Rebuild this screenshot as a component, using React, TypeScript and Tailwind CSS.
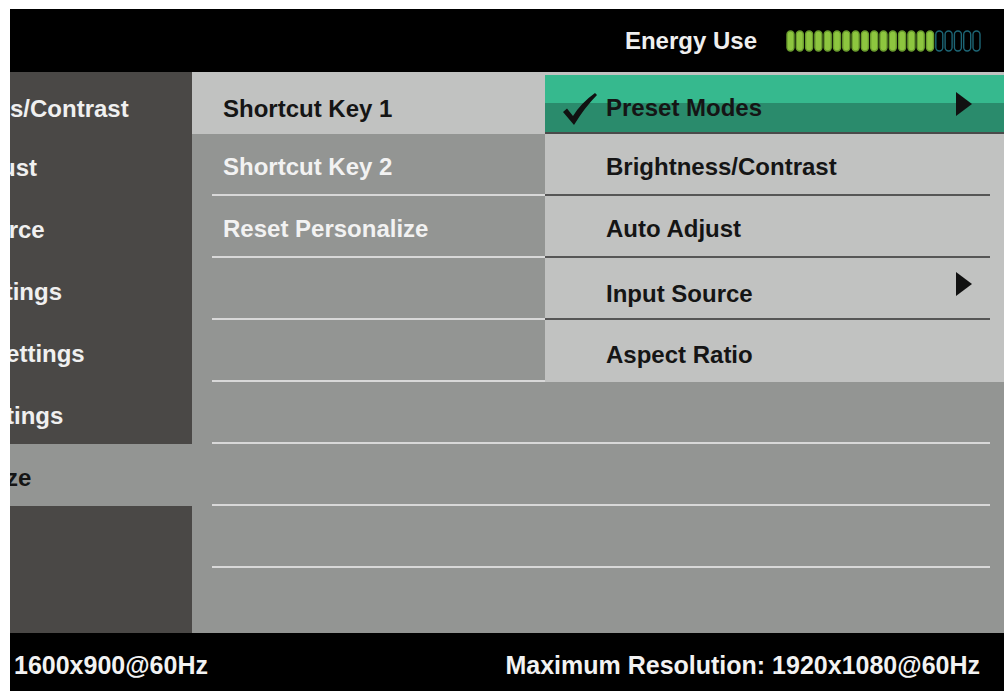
import React from 'react';

const font = { fontFamily: '"Liberation Sans", Arial, sans-serif' };

const leftItems = [
  'Brightness/Contrast',
  'Auto Adjust',
  'Input Source',
  'Color Settings',
  'Display Settings',
  'Other Settings',
  'Personalize',
];

// energy meter: 16 lit, 5 empty
function EnergyMeter() {
  const pills = Array.from({ length: 21 }, (_, i) => i);
  return (
    <svg width="198" height="22" viewBox="0 0 198 22">
      {pills.map(i => (
        <rect
          key={i}
          x={1 + i * 9.3}
          y={1}
          width={7}
          height={20}
          rx={3.5}
          fill={i < 16 ? '#8dc63f' : 'none'}
          stroke={i < 16 ? '#6a9c2e' : '#1d6676'}
          strokeWidth={1.4}
        />
      ))}
    </svg>
  );
}

function Check() {
  return (
    <svg width="36" height="34" viewBox="0 0 36 34">
      <path d="M1 20 L5 16.5 L11 24 Q19 11 33 1 L35 3 Q23 15 12 33 Z" fill="#111" />
    </svg>
  );
}

function Arrow() {
  return (
    <svg width="16" height="24" viewBox="0 0 16 24">
      <path d="M0 0 L16 12 L0 24 Z" fill="#111" />
    </svg>
  );
}

export default function App() {
  return (
    <div
      className="w-[1005px] h-[691px] bg-white pt-[9px] pl-[10px] pr-px flex flex-col overflow-hidden font-bold"
      style={font}
    >
      {/* Header */}
      <div className="h-[63px] bg-black flex items-center justify-end pr-[20px] gap-[29px]">
        <span className="text-[24px] text-[#efefef]">Energy Use</span>
        <EnergyMeter />
      </div>

      {/* Body */}
      <div className="h-[561px] flex text-[24px]">
        {/* main menu */}
        <div className="w-[182px] bg-[#4a4846] flex flex-col overflow-hidden">
          {leftItems.map((item, i) => (
            <div
              key={item}
              className={`h-[62px] flex items-center whitespace-nowrap ${i === 0 ? 'pt-3' : 'pt-[6px]'} ${
                i === 6 ? 'bg-[#939593] text-[#151515]' : 'text-[#f0f0f0]'
              }`}
            >
              <span className={i === 1 ? '-ml-[108px]' : '-ml-[112px]'}>{item}</span>
            </div>
          ))}
        </div>

        <div className="flex-1 bg-[#939593] flex flex-col">
          <div className="flex h-[310px]">
            {/* sub menu */}
            <div className="w-[353px] flex flex-col">
              <div className="h-[62px] bg-[#c1c2c1] flex items-center pl-[31px] pt-3 text-[#151515]">
                Shortcut Key 1
              </div>
              {['Shortcut Key 2', 'Reset Personalize', '', ''].map((t, i) => (
                <div
                  key={i}
                  className="h-[62px] ml-[20px] border-b-2 border-[#d8d8d8] flex items-center pl-[11px] pt-[6px] text-[#f2f2f2]"
                >
                  {t}
                </div>
              ))}
            </div>

            {/* shortcut options */}
            <div className="flex-1 bg-[#c1c2c1] flex flex-col text-[#151515]">
              <div className="h-[62px] pt-[3px] flex flex-col">
                <div className="flex-1 bg-[linear-gradient(to_bottom,#36b98e_50%,#2a8b6c_50%)] flex items-center pl-[17px] pr-[32px]">
                  <span className="pt-[10px]">
                    <Check />
                  </span>
                  <span className="ml-[8px] pt-[9px] flex-1">Preset Modes</span>
                  <Arrow />
                </div>
                <div className="h-[2px] bg-[#4a4a4a]" />
              </div>
              <div className="h-[62px] mr-[14px] border-b-2 border-[#565656] flex items-center pl-[61px] pt-[6px]">
                Brightness/Contrast
              </div>
              <div className="h-[62px] mr-[14px] border-b-2 border-[#565656] flex items-center pl-[61px] pt-[6px]">
                Auto Adjust
              </div>
              <div className="h-[62px] mr-[14px] border-b-2 border-[#565656] flex items-center justify-between pl-[61px] pr-[18px]">
                <span className="pt-[12px]">Input Source</span>
                <span className="-mt-[8px]">
                  <Arrow />
                </span>
              </div>
              <div className="h-[62px] flex items-center pl-[61px] pt-[8px]">Aspect Ratio</div>
            </div>
          </div>

          {[0, 1, 2].map(i => (
            <div key={i} className="h-[62px] ml-[20px] mr-[14px] border-b-2 border-[#d8d8d8]" />
          ))}
        </div>
      </div>

      {/* Footer */}
      <div className="h-[58px] bg-black flex items-center justify-between pl-[4px] pr-[24px] pt-2 text-[25px] text-[#f2f2f2]">
        <span>1600x900@60Hz</span>
        <span>Maximum Resolution: 1920x1080@60Hz</span>
      </div>
    </div>
  );
}
